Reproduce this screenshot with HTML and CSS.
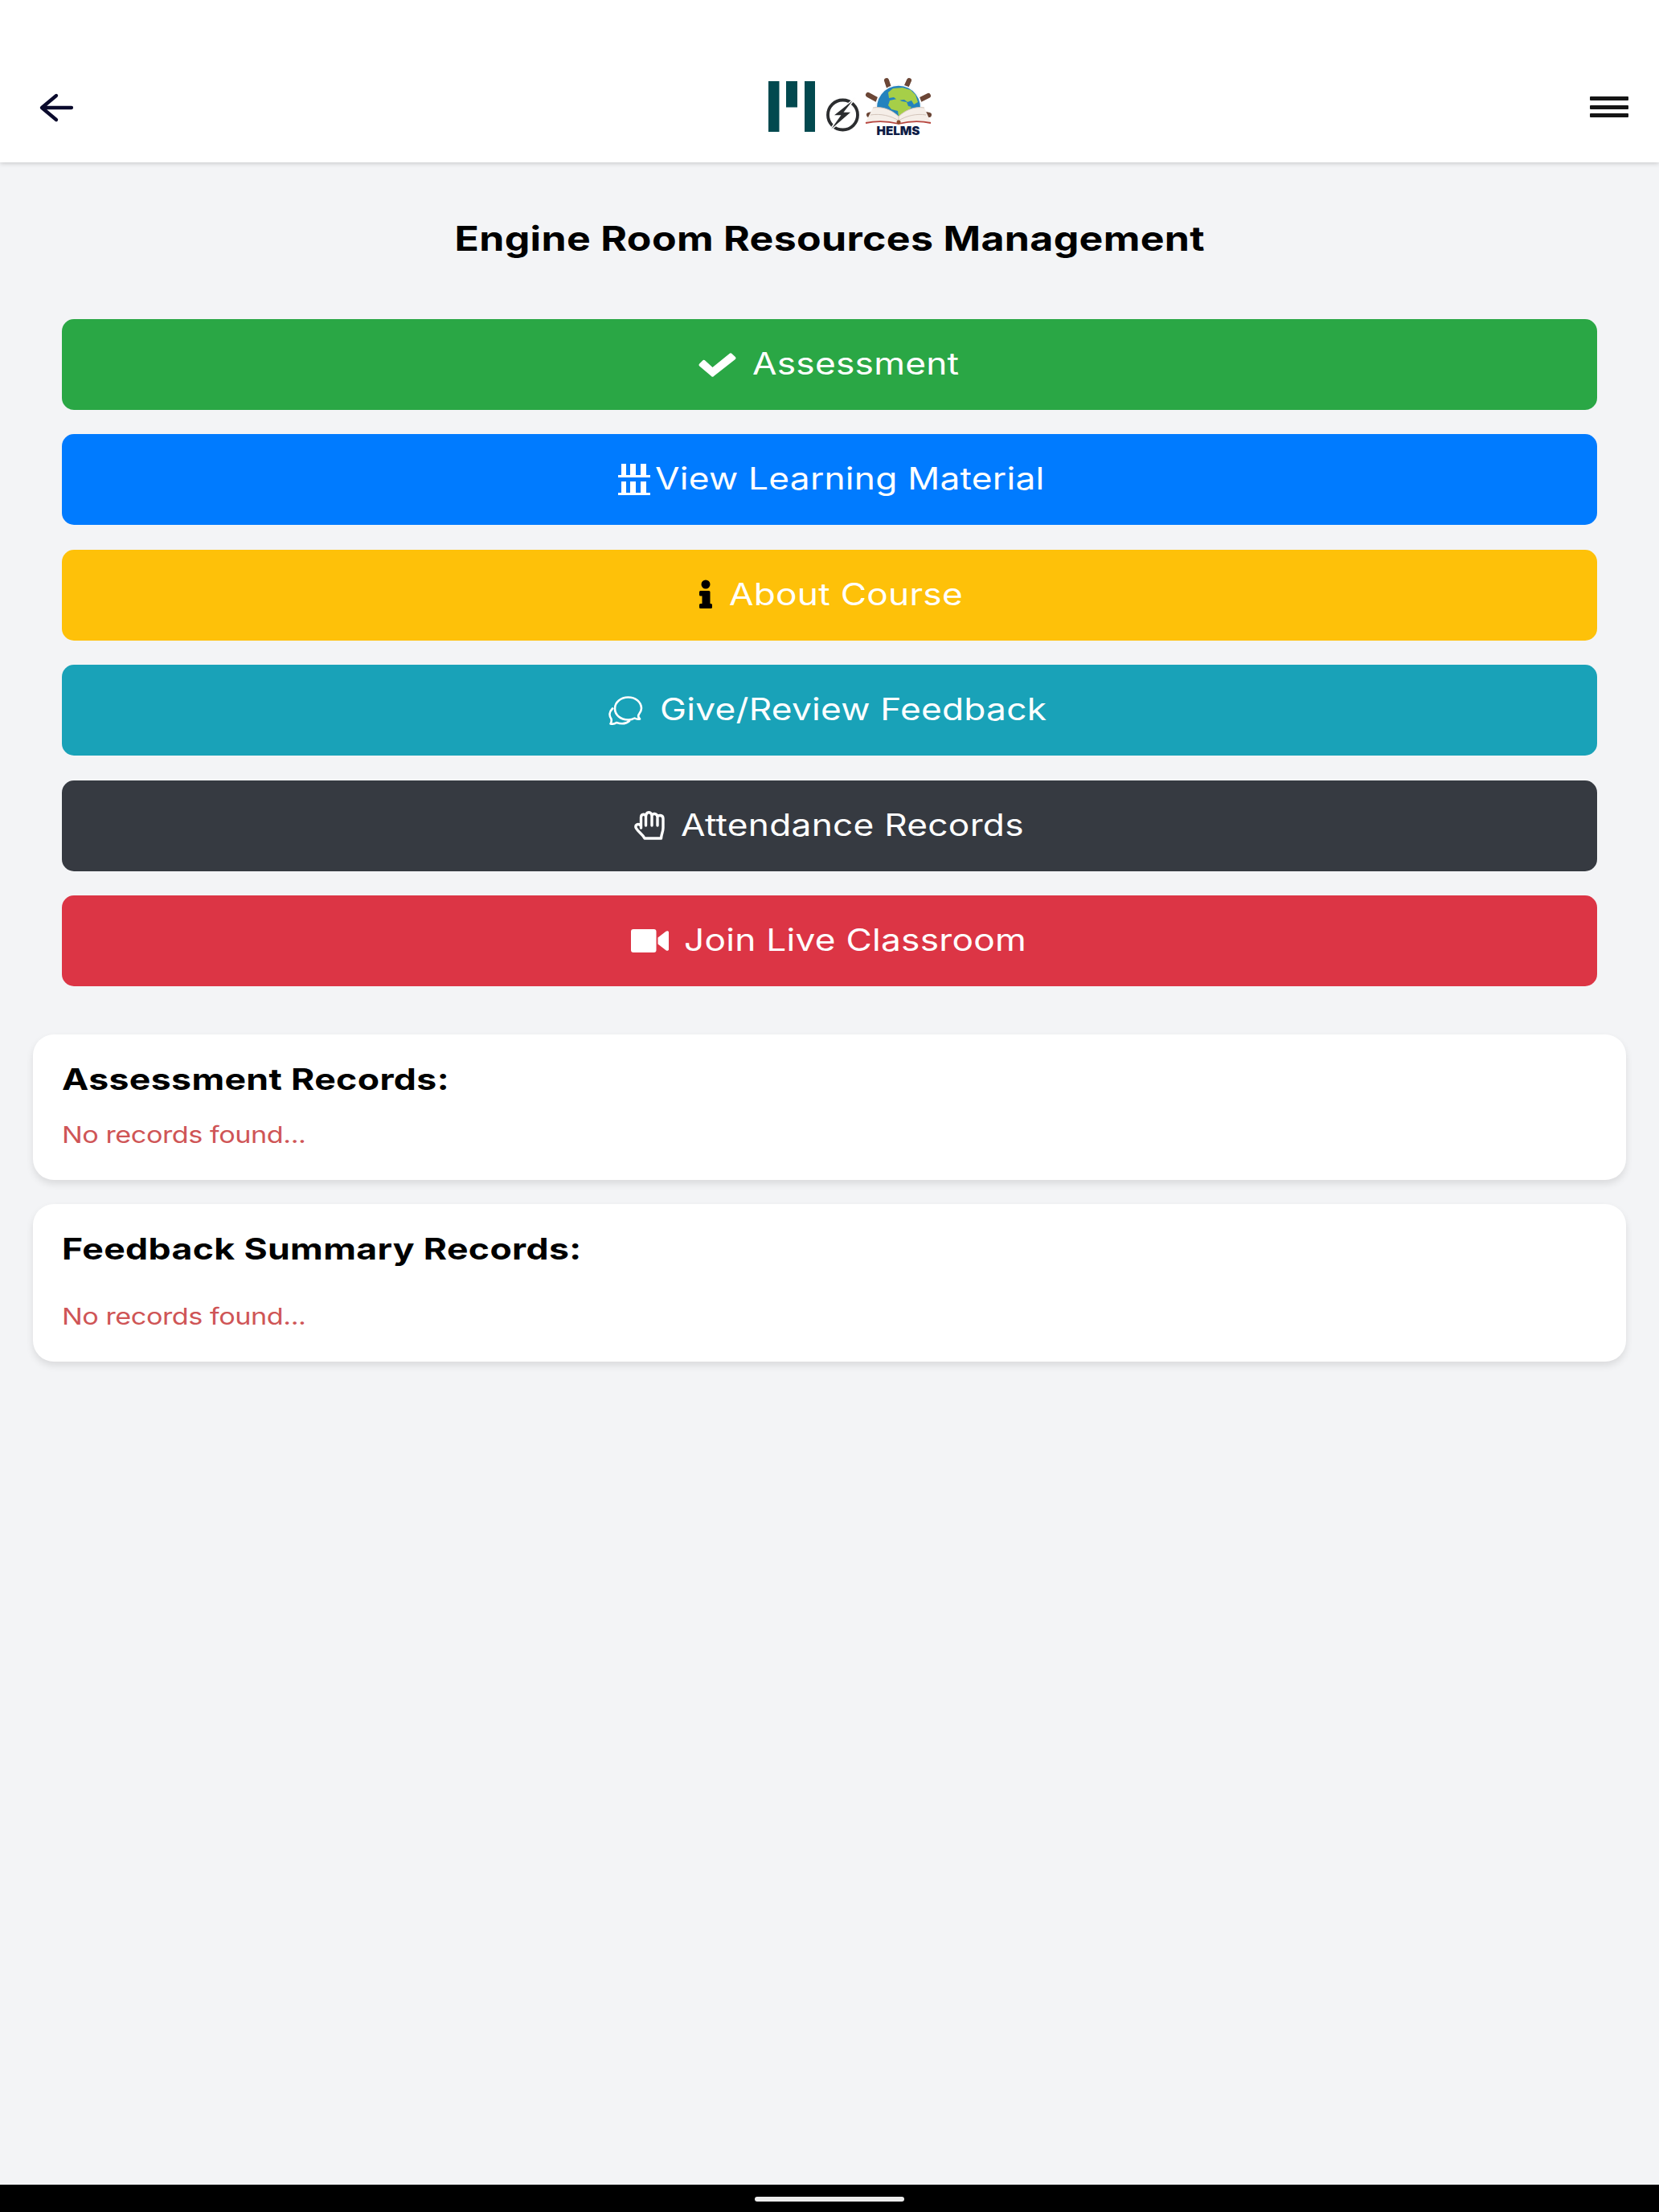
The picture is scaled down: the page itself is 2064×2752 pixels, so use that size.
FILE: index.html
```
<!DOCTYPE html>
<html lang="en">
<head>
    <meta charset="UTF-8">
    <meta name="viewport" content="width=device-width, initial-scale=1.0">
    <title>Engine Room Resources Management</title>
    <link rel="stylesheet" href="styles.css">
</head>

<body>
    <header class="topbar">
        <svg class="back" viewBox="0 0 44 38"><path d="M41 19H5M22 4L4 19l18 15"/></svg>
        <svg class="logo" viewBox="0 0 206 76">
            <g fill="#02494f">
                <rect x="1" y="6" width="13.500" height="63"/>
                <rect x="23" y="6" width="14" height="32.500"/>
                <rect x="46" y="6" width="13" height="63"/>
            </g>
            <circle cx="93.500" cy="48" r="18.500" fill="none" stroke="#2b2d2f" stroke-width="3.800"/>
            <path d="M110 26L81 49h9L75 70l30-26h-9z" fill="#2b2d2f" stroke="#fff" stroke-width="1.500"/>
            <!-- ship wheel, globe and open book -->
            <path class="spokes" d="M151 14l-3-9M172 14l4-9M136 29l-11-6M190 29l10-5M134 46l-8 2M192 46l9 2"/>
            <path d="M134 45a29.500 29.500 0 1 1 58 0z" fill="#f6f8fa"/>
            <path d="M137 46a27 27 0 1 1 52 0l-16 10h-20z" fill="#2382be"/>
            <path d="M150 20l6-5 12-1 10 3 6 6 3 9-5 3-3-5-5 2-4-3-8 1-5-4-6 1zM152 30l9-2 6 3 6 1 2 5 4 1-5 6-2 6-5 5-4-5-1-7-8-2-4-5z" fill="#a6cf48"/>
            <path d="M122 57l9-18c12-2 24 3 32 11 8-8 20-13 32-11l8 18c-14-3-28-2-40 2-12-4-26-5-41-2z" fill="#f5eee8"/>
            <path d="M131 39c12-2 24 3 32 11 8-8 20-13 32-11M163 50v8M128 48c13-2 25 1 35 7 10-6 22-9 34-7" fill="none" stroke="#d3c5bb" stroke-width="1"/>
            <path d="M122 58c14-3 29-2 41 1 12-3 26-4 40-1" fill="none" stroke="#b5433c" stroke-width="1.800"/>
            <circle cx="163" cy="57" r="2.500" fill="#8c4a2c"/>
            <text x="135.500" y="73" class="logo-text" textLength="54" lengthAdjust="spacingAndGlyphs">HELMS</text>
        </svg>
        <div class="menu"><span></span><span></span><span></span></div>
    </header>

    <main>
        <h1><span class="wide">Engine Room Resources Management</span></h1>

        <div class="buttons">
            <a class="btn green">
                <svg class="icon check" viewBox="0 0 47 30"><path d="M1.200 13.500l4-4a2 2 0 0 1 3 0L17.500 18 38.500 1a2 2 0 0 1 3 0l4.300 4a2 2 0 0 1 0 3L19 29a2 2 0 0 1-3 0L1.200 16.500a2 2 0 0 1 0-3z"/></svg>
                <span class="wide">Assessment</span>
            </a>
            <a class="btn blue">
                <svg class="icon shelf" viewBox="0 0 40 40"><path d="M4 0h6v14h5V0h7v14h6V0h7v14h5v3H0v-3h4zM4 22h6v14h5V22h7v14h6V22h7v14h5v3H0v-3h4z"/></svg>
                <span class="wide">View Learning Material</span>
            </a>
            <a class="btn yellow">
                <svg class="icon info" viewBox="0 0 16 36"><circle cx="8" cy="5" r="5.500"/><path d="M1.500 13h10.500a1.500 1.500 0 0 1 1.500 1.500V29h1a1.500 1.500 0 0 1 1.500 1.500v3a1.500 1.500 0 0 1-1.500 1.500h-13A1.500 1.500 0 0 1 0 33.500v-3A1.500 1.500 0 0 1 1.500 29h2V19.500h-2A1.500 1.500 0 0 1 0 18v-3.500A1.500 1.500 0 0 1 1.500 13z"/></svg>
                <span class="wide">About Course</span>
            </a>
            <a class="btn teal">
                <svg class="icon chat" viewBox="0 0 42 36"><path d="M39 28.500c-2-2-2.500-4-1-6C40 20 41 17.500 41 15 40.500 7 33.500 1.500 24.500 1.500S8 7.500 8 15.500s7 14 16.500 14c3 0 5.500-.5 8-2 2 1.200 4.200 1.500 6.500 1zM5 15.500C1 19.500.5 24.500 3.500 28.500c.5 2.500 0 4.500-1 6 3 .5 5.500 0 7.500-1.500 6 2 12 1.500 16-2"/></svg>
                <span class="wide">Give/Review Feedback</span>
            </a>
            <a class="btn dark">
                <svg class="icon hand" viewBox="0 0 38 36"><path d="M8.500 21V8c0-5 6-5 6-.5 0-7.500 7.500-7.500 7.500-1 0-4.500 7-4 7 1.500 0-3.500 7-3.500 7 1.500V21c0 5-2 7-2.500 13H13C10 28 5 26 2.500 21.500.5 17.500 4.500 14.500 8.500 18.500M14.500 8V18M22 7V18M29 9v9"/></svg>
                <span class="wide">Attendance Records</span>
            </a>
            <a class="btn red">
                <svg class="icon video" viewBox="0 0 47 27"><rect width="31.500" height="29" y="-1" rx="3"/><path d="M33.500 9.500l10-7.700c1.500-1 3.500-.5 3.500 1v21.400c0 1.500-2 2-3.500 1l-10-7.700z"/></svg>
                <span class="wide">Join Live Classroom</span>
            </a>
        </div>

        <section class="card">
            <h2><span class="wide">Assessment Records:</span></h2>
            <p><span class="wide">No records found...</span></p>
        </section>
        <section class="card feedback">
            <h2><span class="wide">Feedback Summary Records:</span></h2>
            <p><span class="wide">No records found...</span></p>
        </section>
    </main>

    <footer class="navbar"><span class="handle"></span></footer>
</body>
</html>
```
FILE: styles.css
```
* {
    box-sizing: border-box;
    margin: 0;
    padding: 0;
}

body {
    display: flex;
    flex-direction: column;
    height: 2752px;
    background-color: #f3f4f6;
    font-family: Inter, sans-serif;
    color: #000;
}

.topbar {
    display: flex;
    justify-content: space-between;
    align-items: flex-start;
    height: 202px;
    padding: 95px 38px 0 48px;
    background-color: #fff;
    box-shadow: 0 1px 6px rgba(0, 0, 0, 0.2);
}

.back {
    width: 44px;
    height: 38px;
    margin-top: 20px;
    fill: none;
    stroke: #0a0a2c;
    stroke-width: 4.3;
    stroke-linecap: round;
    stroke-linejoin: round;
}

.logo {
    width: 206px;
    height: 76px;
    overflow: visible;
    margin-left: 45px;
}

.spokes {
    fill: none;
    stroke: #6b4636;
    stroke-width: 6;
    stroke-linecap: round;
}

.logo-text {
    font-size: 15px;
    font-weight: 900;
    fill: #0d1b45;
}

.menu {
    display: flex;
    flex-direction: column;
    gap: 5.5px;
    margin-top: 25px;
}

.menu span {
    width: 48px;
    height: 5px;
    border-radius: 1px;
    background-color: #151515;
}

main {
    flex: 1;
    padding: 0 41px;
}

/* extended letterforms */
.wide {
    display: inline-block;
    white-space: nowrap;
    transform: scaleX(1.18);
    transform-origin: left;
}

h1 {
    height: 195px;
    padding-top: 70px;
    font-size: 42px;
    line-height: 50px;
    font-weight: 700;
    letter-spacing: 0.3px;
    text-align: center;
}

h1 .wide {
    transform: scaleX(1.19);
    transform-origin: center;
}

.buttons {
    display: flex;
    flex-direction: column;
    gap: 30.4px;
    padding: 0 36px;
}

.btn {
    display: flex;
    justify-content: center;
    align-items: center;
    height: 113px;
    border-radius: 15px;
    color: #fff;
    font-size: 37.5px;
    letter-spacing: 0.2px;
}

.btn .wide {
    margin-bottom: 2px;
}

.icon { fill: #fff; overflow: visible; }
.check { width: 47px; height: 30px; margin-right: 20px; }
.shelf { width: 40px; height: 40px; margin-right: 6px; }
.info { width: 16px; height: 36px; margin-right: 21px; fill: #000; }
.chat { width: 42px; height: 36px; margin-right: 22px; }
.hand { width: 38px; height: 36px; margin-right: 20px; }
.video { width: 47px; height: 27px; margin-right: 19px; }

.chat, .hand {
    fill: none;
    stroke: #fff;
    stroke-width: 2.6;
    stroke-linejoin: round;
    stroke-linecap: round;
}

.hand { stroke-width: 3.4; }

.green { background-color: #2aa745; }
.blue { background-color: #007bff; }
.yellow { background-color: #fec109; }
.teal { background-color: #19a2b8; }
.dark { background-color: #363a41; }
.red { background-color: #dc3545; }

.green .wide { width: 260px; }
.blue .wide { width: 480px; }
.yellow .wide { width: 287px; }
.teal .wide { width: 486px; }
.dark .wide { width: 428px; }
.red .wide { width: 428px; }

.card {
    height: 181px;
    margin-top: 30px;
    padding: 33px 36px;
    border-radius: 26px;
    background-color: #fff;
    box-shadow: 0 5px 10px rgba(0, 0, 0, 0.1);
}

.buttons + .card { margin-top: 60px; }
.card.feedback { height: 196px; }

h2 {
    font-size: 37px;
    line-height: 46px;
    font-weight: 700;
    letter-spacing: 0.3px;
}

h2 .wide {
    transform: scaleX(1.205);
}

p {
    margin-top: 28px;
    font-size: 29px;
    line-height: 36px;
    letter-spacing: -0.4px;
    color: #cf5556;
}

.feedback p { margin-top: 43px; }

.navbar {
    display: flex;
    justify-content: center;
    height: 34px;
    padding-top: 15px;
    background-color: #000;
}

.handle {
    width: 186px;
    height: 6px;
    border-radius: 3px;
    background-color: #ececec;
}
```
